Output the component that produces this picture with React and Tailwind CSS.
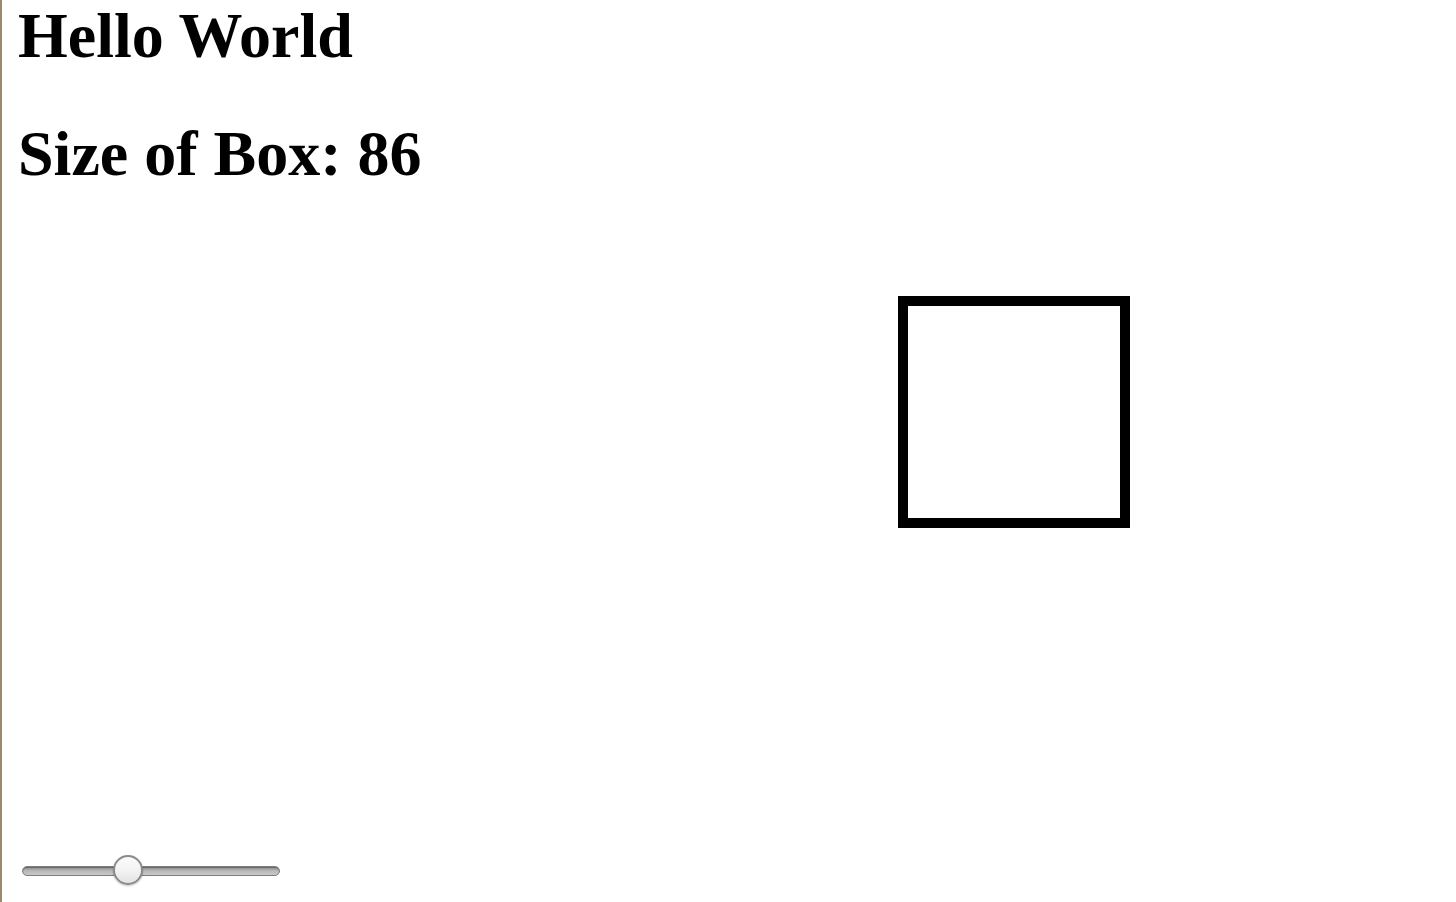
import React, { useState } from "react";

function Slider({ value, max, onChange }) {
  // track is 258px wide, thumb 30px
  const pos = (value / max) * 228;
  return (
    <div className="relative w-[258px] h-[31px] ml-[20px]">
      <div className="absolute left-0 right-0 top-[11px] h-[10px] rounded-full border border-[#7d7d7d] bg-gradient-to-b from-[#8e8e8e] via-[#b9b9b9] to-[#c8c8c8] shadow-[inset_0_1px_1px_rgba(0,0,0,0.3)]" />
      <div
        className="absolute top-0 w-[30px] h-[30px] rounded-full border-2 border-[#8a8a8a] bg-gradient-to-b from-[#fbfbfb] via-[#f3f3f3] to-[#e4e4e4] shadow-[0_1px_2px_rgba(0,0,0,0.25)]"
        style={{ left: pos }}
      />
      <input
        type="range"
        min={0}
        max={max}
        value={value}
        onChange={(e) => onChange(Number(e.target.value))}
        className="absolute inset-0 w-full h-full opacity-0 cursor-pointer"
      />
    </div>
  );
}

export default function App() {
  const [size, setSize] = useState(86);

  return (
    <div className="min-h-screen h-[902px] bg-white border-l-2 border-[#9b8a68] flex flex-col font-['Liberation_Serif','Times_New_Roman',serif] text-black overflow-hidden">
      <h1 className="text-[64px] font-bold leading-[71px] pl-[16px]">Hello World</h1>
      <h2 className="text-[64px] font-bold leading-[71px] pl-[16px] mt-[47px]">Size of Box: {size}</h2>

      {/* Box */}
      <div className="mt-[107px] ml-[896px] w-[232px] h-[232px] border-[10px] border-black" />

      {/* Slider */}
      <div className="mt-[327px]">
        <Slider value={size} max={215} onChange={setSize} />
      </div>
    </div>
  );
}
